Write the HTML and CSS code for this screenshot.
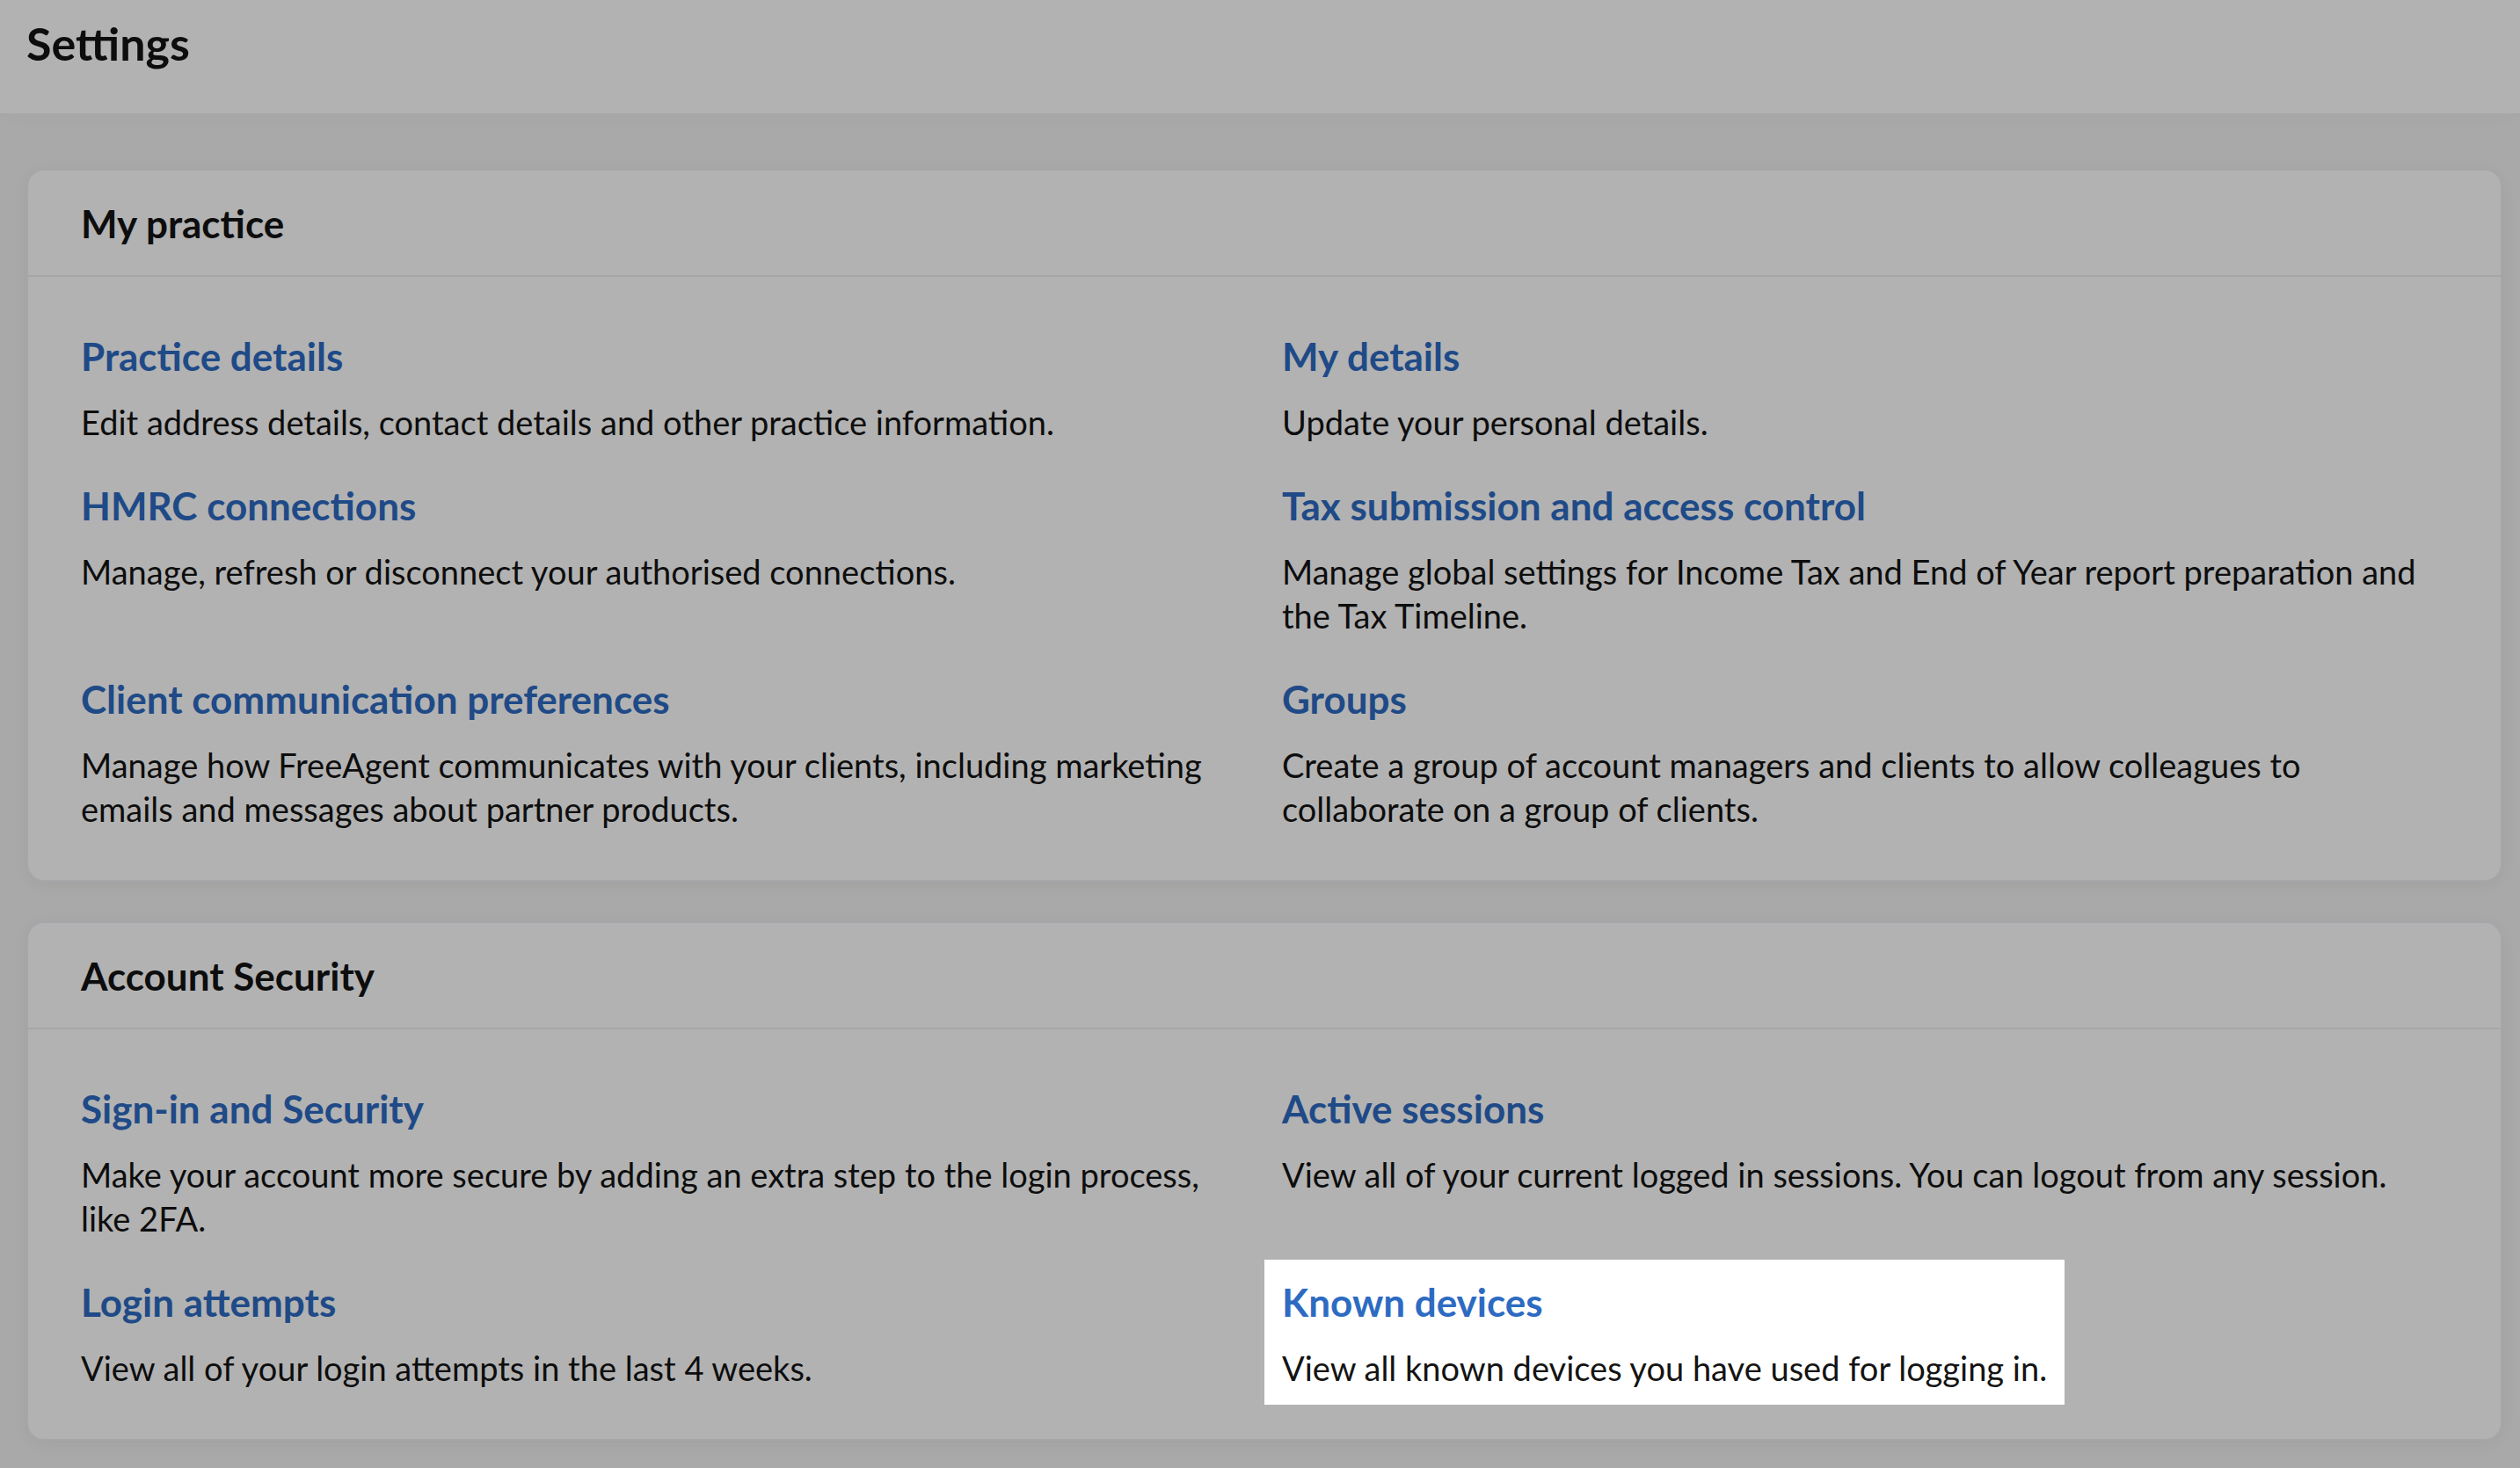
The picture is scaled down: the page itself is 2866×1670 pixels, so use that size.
FILE: index.html
```html
<!DOCTYPE html>
<html>
<head>
    <title>Settings</title>
    <link rel="stylesheet" href="styles.css">
</head>
<body>
    <header class="page-header">
        <h1>Settings</h1>
    </header>
    <main class="settings">
        <section class="card">
            <div class="card-header">
                <h2>My practice</h2>
            </div>
            <div class="card-body">
                <div class="item">
                    <a href="#">Practice details</a>
                    <p>Edit address details, contact details and other practice information.</p>
                </div>
                <div class="item">
                    <a href="#">My details</a>
                    <p>Update your personal details.</p>
                </div>
                <div class="item">
                    <a href="#">HMRC connections</a>
                    <p>Manage, refresh or disconnect your authorised connections.</p>
                </div>
                <div class="item">
                    <a href="#">Tax submission and access control</a>
                    <p>Manage global settings for Income Tax and End of Year report preparation and the Tax Timeline.</p>
                </div>
                <div class="item">
                    <a href="#">Client communication preferences</a>
                    <p>Manage how FreeAgent communicates with your clients, including marketing emails and messages about partner products.</p>
                </div>
                <div class="item">
                    <a href="#">Groups</a>
                    <p>Create a group of account managers and clients to allow colleagues to collaborate on a group of clients.</p>
                </div>
            </div>
        </section>
        <section class="card">
            <div class="card-header">
                <h2>Account Security</h2>
            </div>
            <div class="card-body">
                <div class="item">
                    <a href="#">Sign-in and Security</a>
                    <p>Make your account more secure by adding an extra step to the login process, like 2FA.</p>
                </div>
                <div class="item">
                    <a href="#">Active sessions</a>
                    <p>View all of your current logged in sessions. You can logout from any session.</p>
                </div>
                <div class="item">
                    <a href="#">Login attempts</a>
                    <p>View all of your login attempts in the last 4 weeks.</p>
                </div>
                <!-- highlighted by the tour -->
                <div class="item item-spotlight">
                    <a href="#">Known devices</a>
                    <p>View all known devices you have used for logging in.</p>
                </div>
            </div>
        </section>
    </main>
    <div class="tour-overlay"></div>
</body>
</html>
```

FILE: styles.css
```css
body {
    margin: 0;
    background-color: #f3f3f4;
    font-family: Lato, "Open Sans", sans-serif;
    color: #141414;
}
.page-header {
    height: 129px;
    padding: 0 30px;
    background-color: white;
    border-bottom: 2px solid #eeeef4;
    box-shadow: 0 4px 30px rgba(0, 0, 0, 0.03);
}
.page-header h1 {
    margin: 0;
    padding-top: 19px;
    font-size: 52px;
    line-height: 60px;
    font-weight: 700;
}
.settings {
    padding: 61px 20px 30px 30px;
}
.card {
    background-color: white;
    border: 2px solid #eeeef4;
    border-radius: 20px;
    box-shadow: 0 4px 24px rgba(0, 0, 0, 0.06);
    margin-bottom: 45px;
}
.card-header {
    height: 119px;
    padding: 0 60px;
    display: flex;
    align-items: center;
    border-bottom: 2px solid #eeeef4;
}
.card-header h2 {
    margin: 0;
    font-size: 44px;
    font-weight: 700;
}
.card-body {
    display: grid;
    grid-template-columns: 1fr 1fr;
    row-gap: 5px;
    padding: 42px 40px 39px;
}
.item {
    justify-self: start;
    padding: 21px 20px 17px;
}
.item a {
    display: block;
    font-size: 44px;
    line-height: 54px;
    font-weight: 700;
    color: #2d6bc2;
    text-decoration: none;
}
.item p {
    margin: 23px 0 0;
    font-size: 38px;
    line-height: 50px;
}
/* Product tour */
.tour-overlay {
    position: fixed;
    top: 0;
    left: 0;
    width: 100%;
    height: 100%;
    background-color: rgba(0, 0, 0, 0.3);
    z-index: 10;
}
.item-spotlight {
    position: relative;
    z-index: 20;
    background-color: white;
}
```
